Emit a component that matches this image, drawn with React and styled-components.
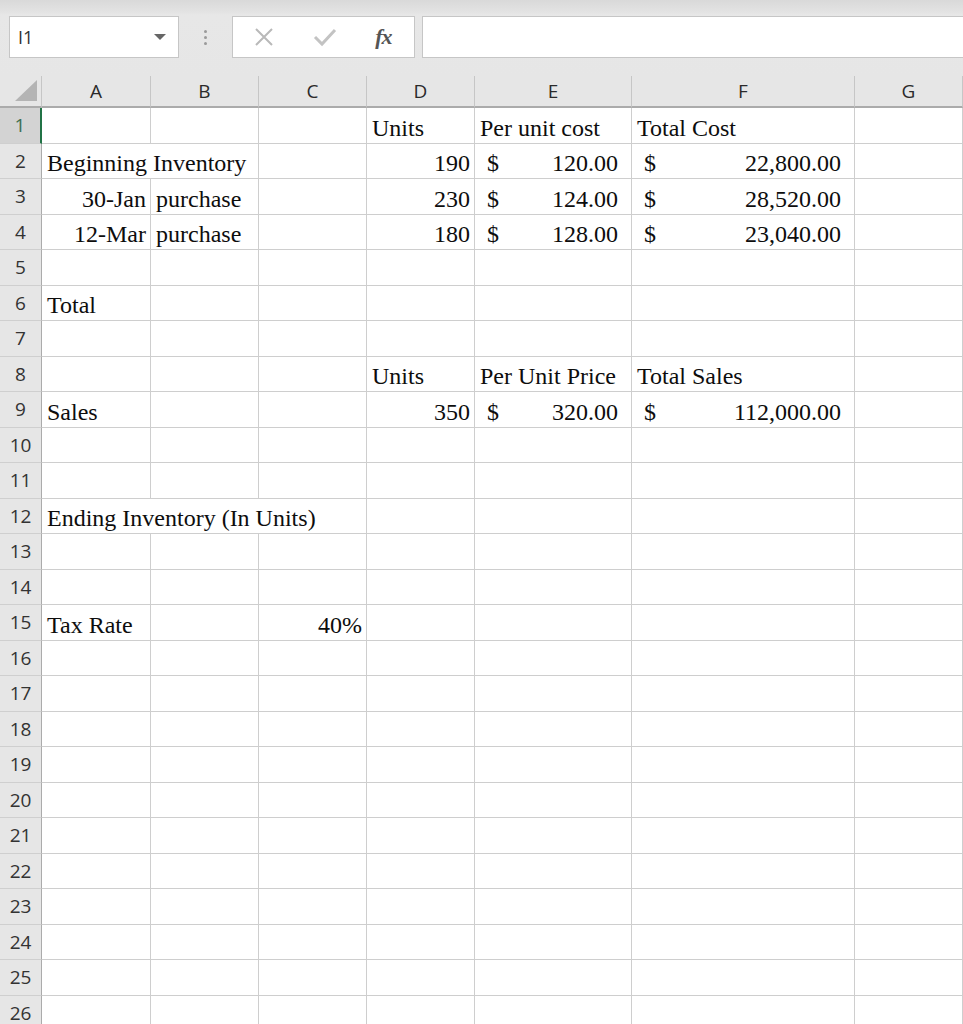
import React from 'react';
import styled, {createGlobalStyle} from "styled-components";

const GlobalStyle = createGlobalStyle`
  html, body {
    margin: 0;
    padding: 0;
    background: #ffffff;
  }
  body {
    width: 963px;
    height: 1024px;
    overflow: hidden;
  }
`

const Page = styled.div`
  width: 963px;
  height: 1024px;
  overflow: hidden;
  display: flex;
  flex-direction: column;
`

const FormulaBar = styled.div`
  height: 76px;
  flex-shrink: 0;
  display: flex;
  align-items: flex-start;
  padding: 16px 0 0 9px;
  box-sizing: border-box;
  background: linear-gradient(#d9d9d9 0px, #e3e3e3 12px, #e7e7e7 15px, #e6e6e6 100%);
`

const NameBox = styled.div`
  width: 170px;
  height: 42px;
  box-sizing: border-box;
  background: #fff;
  border: 1px solid #c6c6c6;
  display: flex;
  align-items: center;
  justify-content: space-between;
  padding: 0 12px 0 8px;
  font-family: "Open Sans", "Noto Sans", sans-serif;
  font-size: 18px;
  color: #333;
`

const Caret = styled.div`
  width: 0;
  height: 0;
  border-left: 6px solid transparent;
  border-right: 6px solid transparent;
  border-top: 6px solid #666;
`

const Dots = styled.div`
  width: 53px;
  height: 42px;
  display: flex;
  flex-direction: column;
  align-items: center;
  justify-content: center;
  gap: 3px;
`

const Dot = styled.div`
  width: 3px;
  height: 3px;
  border-radius: 50%;
  background: #9a9a9a;
`

const ButtonBox = styled.div`
  width: 183px;
  height: 42px;
  box-sizing: border-box;
  background: #fff;
  border: 1px solid #c6c6c6;
  display: flex;
  align-items: center;
  justify-content: space-around;
  padding: 0 4px 0 2px;
`

const FxText = styled.span`
  font-family: "Liberation Serif", "DejaVu Serif", serif;
  font-style: italic;
  font-weight: bold;
  font-size: 22px;
  color: #555;
  letter-spacing: -1px;
`

const FormulaInput = styled.div`
  flex: 1;
  height: 42px;
  margin-left: 7px;
  box-sizing: border-box;
  background: #fff;
  border: 1px solid #c6c6c6;
  border-right: none;
`

const Sheet = styled.div`
  display: grid;
  grid-template-columns: 42px 109px 108px 108px 108px 157px 223px 108px;
  grid-template-rows: 32px;
  grid-auto-rows: 35.5px;
  background: #fff;
`

const Corner = styled.div`
  background: #e6e6e6;
  border-right: 1px solid #c6c6c6;
  border-bottom: 2px solid #ababab;
  box-sizing: border-box;
  display: flex;
  align-items: flex-end;
  justify-content: flex-end;
  padding: 0 4px 5px 0;
`

const Triangle = styled.div`
  width: 0;
  height: 0;
  border-left: 22px solid transparent;
  border-bottom: 21px solid #b4b4b4;
`

const ColHead = styled.div`
  background: #e6e6e6;
  border-right: 1px solid #c6c6c6;
  border-bottom: 2px solid #ababab;
  box-sizing: border-box;
  display: flex;
  align-items: center;
  justify-content: center;
  font-family: "Open Sans", "Noto Sans", sans-serif;
  font-size: 19px;
  color: #2a2a2a;
`

const RowHead = styled.div`
  background: ${p => p.selected ? '#d3d3d3' : '#e6e6e6'};
  border-right: ${p => p.selected ? '2px solid #217346' : '1px solid #ababab'};
  border-bottom: 1px solid #cfcfcf;
  box-sizing: border-box;
  display: flex;
  align-items: center;
  justify-content: center;
  font-family: "Open Sans", "Noto Sans", sans-serif;
  font-size: 19px;
  color: ${p => p.selected ? '#3c6e52' : '#333'};
`

const Cell = styled.div`
  grid-column: span ${p => p.span || 1};
  border-right: 1px solid #cecece;
  border-bottom: 1px solid #cecece;
  box-sizing: border-box;
  display: flex;
  align-items: flex-end;
  justify-content: ${p => p.right ? 'flex-end' : 'flex-start'};
  padding: 0 4px 0 5px;
  font-family: "Liberation Serif", "Times New Roman", serif;
  font-size: 24px;
  line-height: 1.2;
  color: #0d0d0d;
  white-space: nowrap;
  overflow: hidden;
`

const MoneyCell = styled(Cell)`
  justify-content: space-between;
  padding: 0 13px 0 12px;
`

const header = ['A', 'B', 'C', 'D', 'E', 'F', 'G'];

// what each row holds; columns that a cell covers are skipped
const data = {
    1: [null, null, null, {t: 'Units'}, {t: 'Per unit cost'}, {t: 'Total Cost'}, null],
    2: [{t: 'Beginning Inventory', span: 2}, null, {t: '190', right: true}, {m: '120.00'}, {m: '22,800.00'}, null],
    3: [{t: '30-Jan', right: true}, {t: 'purchase'}, null, {t: '230', right: true}, {m: '124.00'}, {m: '28,520.00'}, null],
    4: [{t: '12-Mar', right: true}, {t: 'purchase'}, null, {t: '180', right: true}, {m: '128.00'}, {m: '23,040.00'}, null],
    6: [{t: 'Total'}, null, null, null, null, null, null],
    8: [null, null, null, {t: 'Units'}, {t: 'Per Unit Price'}, {t: 'Total Sales'}, null],
    9: [{t: 'Sales'}, null, null, {t: '350', right: true}, {m: '320.00'}, {m: '112,000.00'}, null],
    12: [{t: 'Ending Inventory (In Units)', span: 3}, null, null, null, null],
    15: [{t: 'Tax Rate'}, null, {t: '40%', right: true}, null, null, null, null],
};

function renderRow(n) {
    const cells = data[n] || [null, null, null, null, null, null, null];
    return cells.map((c, i) => {
        const key = n + '-' + i;
        if (!c) return <Cell key={key}/>;
        if (c.m) {
            return (
                <MoneyCell key={key}>
                    <span>$</span>
                    <span>{c.m}</span>
                </MoneyCell>
            );
        }
        return <Cell key={key} span={c.span} right={c.right}>{c.t}</Cell>;
    });
}

function App() {
    const rows = [];
    for (let n = 1; n <= 26; n++) rows.push(n);

    return (
        <Page>
            <GlobalStyle/>
            <FormulaBar>
                <NameBox>
                    <span>I1</span>
                    <Caret/>
                </NameBox>
                <Dots>
                    <Dot/>
                    <Dot/>
                    <Dot/>
                </Dots>
                <ButtonBox>
                    <svg width="22" height="22" viewBox="0 0 22 22">
                        <path d="M3 3 L19 19 M19 3 L3 19" stroke="#b9b9b9" strokeWidth="2" fill="none"/>
                    </svg>
                    <svg width="26" height="22" viewBox="0 0 26 22">
                        <path d="M3 11 L10 18 L23 4" stroke="#c3c3c3" strokeWidth="3" fill="none"/>
                    </svg>
                    <FxText>fx</FxText>
                </ButtonBox>
                <FormulaInput/>
            </FormulaBar>
            <Sheet>
                <Corner><Triangle/></Corner>
                {header.map(h => <ColHead key={h}>{h}</ColHead>)}
                {rows.map(n => (
                    <React.Fragment key={n}>
                        <RowHead selected={n === 1}>{n}</RowHead>
                        {renderRow(n)}
                    </React.Fragment>
                ))}
            </Sheet>
        </Page>
    );
}

export default App;
